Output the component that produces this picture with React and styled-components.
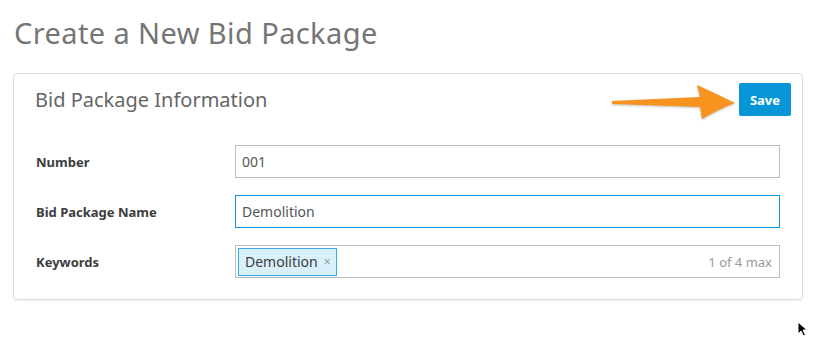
import React from 'react';
import styled, { createGlobalStyle } from 'styled-components';

const GlobalStyle = createGlobalStyle`
  body {
    margin: 0;
    background: #fff;
    font-family: 'Noto Sans', 'Open Sans', sans-serif;
  }
`;

const Page = styled.div`
  position: relative;
  width: 818px;
  height: 346px;
  padding: 13px 15px 0 13px;
  box-sizing: border-box;
`;

const Title = styled.h1`
  margin: 0 0 0 1px;
  font-size: 29px;
  line-height: 39px;
  font-weight: 400;
  letter-spacing: 0.4px;
  color: #757575;
`;

const Card = styled.section`
  margin-top: 21px;
  border: 1px solid #dcdcdc;
  border-radius: 4px;
  box-shadow: 0 1px 2px rgba(0, 0, 0, 0.08);
  padding: 9px 11px 21px 21px;
`;

const CardHeader = styled.div`
  position: relative;
  display: flex;
  justify-content: space-between;
  align-items: center;
  height: 33px;
  margin-bottom: 29px;
`;

const CardTitle = styled.h2`
  margin: 0;
  font-size: 20px;
  font-weight: 400;
  color: #666;
`;

const SaveButton = styled.button`
  height: 33px;
  width: 52px;
  border: none;
  border-radius: 2px;
  background: #0696d7;
  color: #fff;
  font-family: inherit;
  font-weight: 700;
  font-size: 13px;
  cursor: pointer;
`;

const Arrow = styled.svg`
  position: absolute;
  right: 54px;
  top: 0px;
  filter: drop-shadow(0 1px 1px rgba(0, 0, 0, 0.25));
`;

const Form = styled.div`
  display: flex;
  flex-direction: column;
  gap: 17px;
  padding-right: 11px;
`;

const Row = styled.div`
  display: grid;
  grid-template-columns: 200px 1fr;
  align-items: center;
`;

const Label = styled.label`
  font-size: 13px;
  font-weight: 700;
  color: #3c3c3c;
  padding-left: 1px;
`;

const Field = styled.div`
  height: 33px;
  box-sizing: border-box;
  border: 1px solid ${(p) => (p.$focused ? '#0696d7' : '#bdbdbd')};
  display: flex;
  align-items: center;
  padding: 0 7px 0 6px;
  font-size: 14px;
  color: #555;
  gap: 6px;
`;

const TagField = styled(Field)`
  padding: 0 7px 0 2px;
`;

const Tag = styled.span`
  height: 28px;
  box-sizing: border-box;
  display: inline-flex;
  align-items: center;
  gap: 6px;
  padding: 0 5px 0 6px;
  background: #d9eff9;
  border: 1px solid #3aade6;
  color: #3c3c3c;
  font-size: 14px;
`;

const TagClose = styled.span`
  font-size: 12px;
  color: #999;
`;

const Counter = styled.span`
  margin-left: auto;
  font-size: 13px;
  color: #9a9a9a;
`;

const Cursor = styled.svg`
  position: absolute;
  left: 797px;
  top: 321px;
`;

export default function App() {
  return (
    <>
      <GlobalStyle />
      <Page>
        <Title>Create a New Bid Package</Title>
        <Card>
          <CardHeader>
            <CardTitle>Bid Package Information</CardTitle>
            <Arrow width="126" height="38" viewBox="0 0 126 38">
              <path
                d="M1,18 L89,14 L86,2 Q106,11 124,20 Q106,27 91,36 L89,24 L1,21 Z"
                fill="#f7931e"
              />
            </Arrow>
            <SaveButton>Save</SaveButton>
          </CardHeader>
          <Form>
            <Row>
              <Label>Number</Label>
              <Field>001</Field>
            </Row>
            <Row>
              <Label>Bid Package Name</Label>
              <Field $focused>Demolition</Field>
            </Row>
            <Row>
              <Label>Keywords</Label>
              <TagField>
                <Tag>
                  Demolition <TagClose>×</TagClose>
                </Tag>
                <Counter>1 of 4 max</Counter>
              </TagField>
            </Row>
          </Form>
        </Card>
        <Cursor width="12" height="16" viewBox="0 0 12 16">
          <path d="M1,1 L1,13 L4,10 L6.5,15 L8.5,14 L6,9 L10,9 Z" fill="#000" stroke="#fff" strokeWidth="1" />
        </Cursor>
      </Page>
    </>
  );
}
